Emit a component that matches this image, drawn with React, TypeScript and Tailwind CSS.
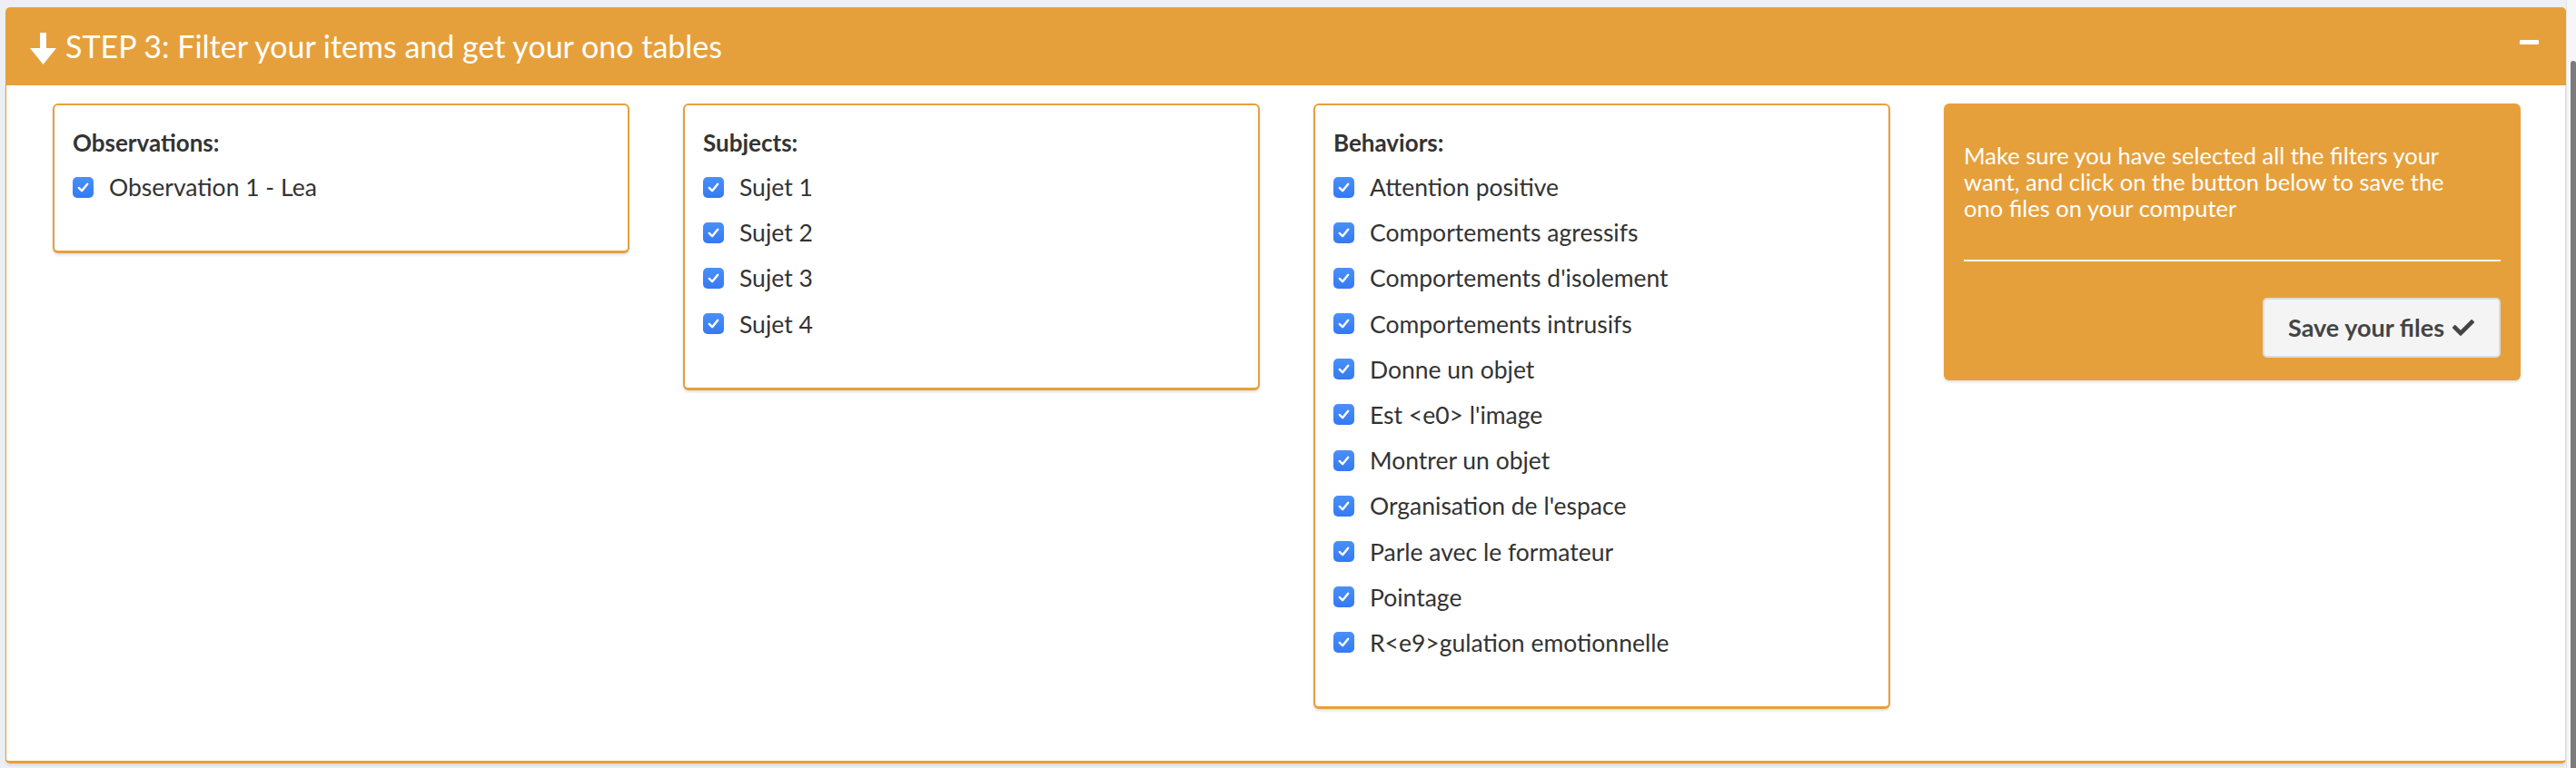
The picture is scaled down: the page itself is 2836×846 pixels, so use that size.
import React from 'react'
import { FaCheck } from 'react-icons/fa'

const observations = ['Observation 1 - Lea']
const subjects = ['Sujet 1', 'Sujet 2', 'Sujet 3', 'Sujet 4']
const behaviors = [
  'Attention positive',
  'Comportements agressifs',
  "Comportements d'isolement",
  'Comportements intrusifs',
  'Donne un objet',
  'Est <e0> l\'image',
  'Montrer un objet',
  "Organisation de l'espace",
  'Parle avec le formateur',
  'Pointage',
  'R<e9>gulation emotionnelle',
]

const CheckBox: React.FC = () => (
  <span className="flex h-[23px] w-[23px] shrink-0 items-center justify-center rounded-[5px] bg-gradient-to-b from-[#4a90f8] to-[#3479f4]">
    <svg width="15" height="15" viewBox="0 0 16 16" fill="none">
      <path d="M3 8.5 L6.5 12 L13 4" stroke="white" strokeWidth="2.6" strokeLinecap="round" strokeLinejoin="round" />
    </svg>
  </span>
)

const FilterCard: React.FC<{ title: string; items: string[] }> = ({ title, items }) => (
  <div className="rounded-[6px] border-2 border-b-[3px] border-[#e6a03b] bg-white px-[20px] pt-[23px] pb-[52px] shadow-[0_2px_3px_rgba(0,0,0,0.12)]">
    <p className="text-[26px] font-bold leading-[36px] text-[#333]">{title}</p>
    <div className="mt-[13px] flex flex-col gap-[14.2px]">
      {items.map((item) => (
        <label key={item} className="flex h-[36px] items-center gap-[17px] text-[26.5px] leading-[36px] text-[#333]">
          <CheckBox />
          <span>{item}</span>
        </label>
      ))}
    </div>
  </div>
)

export default function App() {
  return (
    <main className="flex min-h-screen bg-[#ecf0f5] font-['Lato',sans-serif]">
      <div className="flex-1 pl-[6px] pt-[8px] pb-[6px]">
        {/* header */}
        <div className="flex h-[86px] items-center justify-between rounded-t-[5px] bg-[#e6a03b] pl-[27px] pr-[30px]">
          <div className="flex items-center gap-[10px] text-white">
            <svg width="29" height="35" viewBox="0 0 29 35" fill="white" className="mt-[4px]">
              <rect x="11" y="0" width="7" height="19" />
              <polygon points="0,17 29,17 14.5,35" />
            </svg>
            <h3 className="text-[34px] leading-none">STEP 3: Filter your items and get your ono tables</h3>
          </div>
          <span className="mb-[9px] block h-[5px] w-[21px] rounded-[1px] bg-white" />
        </div>

        {/* body */}
        <div className="rounded-b-[5px] border-b-[3px] border-l border-r border-[#e6a03b] border-r-[#f0dcbc] bg-white pt-[20px] pb-[57px] shadow-[0_2px_3px_rgba(0,0,0,0.1)]">
          <div className="grid grid-cols-4 items-start gap-x-[59px] pl-[51px] pr-[49px]">
            <FilterCard title="Observations:" items={observations} />
            <FilterCard title="Subjects:" items={subjects} />
            <FilterCard title="Behaviors:" items={behaviors} />

            <div className="rounded-[6px] bg-[#e6a03b] px-[22px] pt-[43px] pb-[25px] shadow-[0_2px_3px_rgba(0,0,0,0.12)]">
              <p className="max-w-[555px] text-[25.5px] leading-[29px] text-white">
                Make sure you have selected all the filters your want, and click on the button below to save the ono files on your computer
              </p>
              <div className="mt-[42px] h-[2px] bg-white/90" />
              <div className="mt-[40px] flex justify-end">
                <button className="flex h-[66px] items-center gap-[8px] rounded-[5px] border-2 border-[#dcdcdc] bg-[#f4f4f4] px-[26px] text-[27px] font-bold text-[#444]">
                  Save your files
                  <FaCheck className="h-[24px] w-[26px]" />
                </button>
              </div>
            </div>
          </div>
        </div>
      </div>

      {/* scrollbar */}
      <div className="w-[11px] border-l border-[#e4e4e4] bg-[#f6f6f7] pt-[67px]">
        <div className="ml-[4px] h-full rounded-t-[4px] bg-[#7b7b7b]" />
      </div>
    </main>
  )
}
